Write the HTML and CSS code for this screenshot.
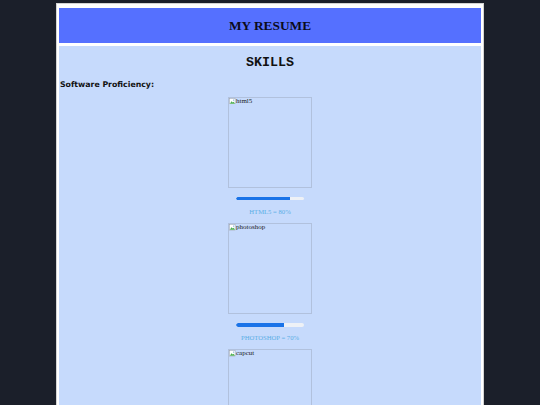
FILE: index.html
```html
<!DOCTYPE html>
<html>
<head>
<meta charset="utf-8">
<link rel="stylesheet" href="styles.css">
</head>
<body>
<div class="page">
  <header class="banner">MY RESUME</header>
  <main class="content">
    <h1 class="title">SKILLS</h1>
    <h3 class="subtitle">Software Proficiency:</h3>
    <div class="skill">
      <div class="pic"><svg class="broken" viewBox="0 0 16 16"><rect x="1.5" y="1.5" width="13" height="13" fill="#fff" stroke="#999"/><path d="M2 14 L6 8 L9 11 L11 9 L14 13 L14 14 Z" fill="#4caf50"/><circle cx="11" cy="5" r="1.6" fill="#6fa8dc"/></svg><span class="alt">html5</span></div>
      <div class="bar"><div class="fill" style="width:80%"></div></div>
      <div class="label">HTML5 = 80%</div>
    </div>
    <div class="skill">
      <div class="pic"><svg class="broken" viewBox="0 0 16 16"><rect x="1.5" y="1.5" width="13" height="13" fill="#fff" stroke="#999"/><path d="M2 14 L6 8 L9 11 L11 9 L14 13 L14 14 Z" fill="#4caf50"/><circle cx="11" cy="5" r="1.6" fill="#6fa8dc"/></svg><span class="alt">photoshop</span></div>
      <div class="bar"><div class="fill" style="width:70%"></div></div>
      <div class="label">PHOTOSHOP = 70%</div>
    </div>
    <div class="skill">
      <div class="pic"><svg class="broken" viewBox="0 0 16 16"><rect x="1.5" y="1.5" width="13" height="13" fill="#fff" stroke="#999"/><path d="M2 14 L6 8 L9 11 L11 9 L14 13 L14 14 Z" fill="#4caf50"/><circle cx="11" cy="5" r="1.6" fill="#6fa8dc"/></svg><span class="alt">capcut</span></div>
      <div class="bar"><div class="fill" style="width:60%"></div></div>
      <div class="label">CAPCUT = 60%</div>
    </div>
  </main>
</div>
</body>
</html>
```
FILE: styles.css
```css
html, body {
  margin: 0;
  padding: 0;
}
body {
  background: #1b1f2a;
  padding-top: 3px;
}
.page {
  width: 422px;
  margin: 0 auto;
  background: #ffffff;
  border: 1px solid #d4d4d4;
  padding: 4px 2px 0;
}
.banner {
  height: 35px;
  background: #5570ff;
  display: flex;
  align-items: center;
  justify-content: center;
  font-family: "Liberation Serif", serif;
  font-weight: bold;
  font-size: 13.33px;
  color: #0b0b1a;
  margin-bottom: 3px;
}
.content {
  background: #c6dafc;
  padding: 0 0 40px 0;
  overflow: hidden;
}
.title {
  font-family: "Liberation Mono", monospace;
  font-weight: bold;
  font-size: 13.33px;
  line-height: 15px;
  text-align: center;
  color: #111;
  margin: 9px 0;
}
.subtitle {
  font-family: "DejaVu Sans", sans-serif;
  font-weight: bold;
  font-size: 7.8px;
  line-height: 9px;
  color: #111;
  margin: 10px 0 7.5px 1px;
}
.skill {
  display: flex;
  flex-direction: column;
  align-items: center;
}
.pic {
  width: 82px;
  height: 89px;
  border: 1px solid rgba(150, 162, 185, 0.45);
  display: flex;
  align-items: flex-start;
  font-family: "Liberation Serif", serif;
  font-size: 7px;
  line-height: 7px;
  color: #1a1a1a;
}
.broken {
  width: 6.7px;
  height: 6.7px;
  flex: none;
}
.alt {
  margin-left: 0.3px;
}
.bar {
  width: 68px;
  height: 3.4px;
  margin-top: 9.3px;
  background: #eef1f6;
  border-radius: 2px;
  overflow: hidden;
}
.fill {
  height: 100%;
  background: #1a73e8;
  border-radius: 2px 0 0 2px;
}
.label {
  font-family: "Liberation Serif", serif;
  font-size: 6.67px;
  line-height: 7.7px;
  color: #5aaee6;
  margin: 7.4px 0 7.6px;
}
```
